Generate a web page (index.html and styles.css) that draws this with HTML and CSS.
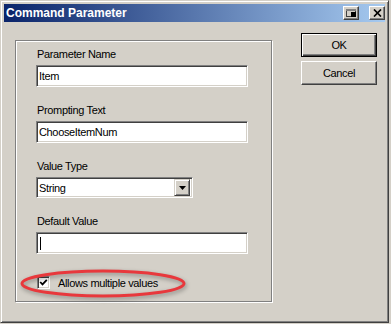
FILE: index.html
```html
<!DOCTYPE html>
<html lang="en">
<head>
    <meta charset="UTF-8">
    <title>Command Parameter</title>
    <link rel="stylesheet" href="styles.css">
</head>
<body>
    <div class="window">
        <div class="titlebar">
            <span class="title">Command Parameter</span>
            <div class="title-buttons">
                <span class="tbtn">
                    <svg width="12" height="10" viewBox="0 0 12 10">
                        <rect x="1.5" y="1.5" width="9" height="7" fill="none" stroke="#404040"/>
                        <rect x="1" y="1" width="10" height="2" fill="#808080"/>
                        <rect x="6" y="4" width="5" height="5" fill="#000"/>
                    </svg>
                </span>
                <span class="tbtn">
                    <svg width="9" height="8" viewBox="0 0 9 8">
                        <path d="M1 0.5 L8 7.5 M8 0.5 L1 7.5" stroke="#000" stroke-width="1.7"/>
                    </svg>
                </span>
            </div>
        </div>

        <div class="content">
            <div class="group">
                <div class="row">
                    <div class="label">Parameter Name</div>
                    <div class="field">Item</div>
                </div>
                <div class="row">
                    <div class="label">Prompting Text</div>
                    <div class="field">ChooseItemNum</div>
                </div>
                <div class="row">
                    <div class="label">Value Type</div>
                    <div class="select">
                        <span class="select-text">String</span>
                        <span class="drop-btn">
                            <svg width="7" height="4" viewBox="0 0 7 4"><path d="M0 0 H7 L3.5 4 Z" fill="#000"/></svg>
                        </span>
                    </div>
                </div>
                <div class="row">
                    <div class="label">Default Value</div>
                    <div class="field"><span class="caret"></span></div>
                </div>
                <div class="check-row">
                    <span class="checkbox">
                        <svg width="9" height="9" viewBox="0 0 9 9"><path d="M1.2 4 L3.5 6.4 L7.8 1.8" fill="none" stroke="#000" stroke-width="1.8"/></svg>
                    </span>
                    <span>Allows multiple values</span>
                </div>
            </div>

            <div class="buttons">
                <div class="btn default">OK</div>
                <div class="btn">Cancel</div>
            </div>
        </div>

        <!-- red marker drawn over the screenshot -->
        <svg class="highlight" width="389" height="323" viewBox="0 0 389 323">
            <ellipse cx="103" cy="283.5" rx="81" ry="12.5" fill="none" stroke="#e8383c" stroke-width="3"/>
        </svg>
    </div>
</body>
</html>
```

FILE: styles.css
```css
body {
    margin: 0;
    background: #d4d0c8;
    font-family: "Liberation Sans", Arial, sans-serif;
    font-size: 11px;
    letter-spacing: -0.35px;
    color: #000;
}
.window {
    position: relative;
    box-sizing: border-box;
    width: 389px;
    height: 323px;
    padding: 3px;
    background: #d4d0c8;
    border: 1px solid;
    border-color: #d4d0c8 #404040 #404040 #d4d0c8;
    box-shadow: inset 1px 1px #fff, inset -1px -1px #808080;
}
.titlebar {
    display: flex;
    align-items: center;
    justify-content: space-between;
    height: 18px;
    padding: 0 0 0 2px;
    background: linear-gradient(to right, #0a246a, #a6caf0);
}
.title {
    color: #fff;
    font-weight: bold;
    font-size: 12px;
    letter-spacing: 0;
}
.title-buttons {
    display: flex;
    gap: 10px;
}
.tbtn {
    display: flex;
    align-items: center;
    justify-content: center;
    box-sizing: border-box;
    width: 16px;
    height: 14px;
    background: #d4d0c8;
    border: 1px solid;
    border-color: #fff #404040 #404040 #fff;
    box-shadow: inset -1px -1px #808080;
}
.content {
    display: flex;
    align-items: flex-start;
    padding: 11px 0 0 11px;
}
.group {
    box-sizing: border-box;
    width: 257px;
    height: 262px;
    margin-top: 7px;
    padding: 7px 0 0 20px;
    border: 1px solid #808080;
    box-shadow: inset 1px 1px #fff, 1px 1px #fff;
}
.row {
    margin-bottom: 17px;
}
.label {
    line-height: 13px;
    margin-bottom: 4px;
    padding-left: 1px;
}
.field,
.select {
    box-sizing: border-box;
    display: flex;
    align-items: center;
    width: 212px;
    height: 22px;
    padding-left: 2px;
    background: #fff;
    border: 1px solid;
    border-color: #808080 #fff #fff #808080;
    box-shadow: inset 1px 1px #404040, inset -1px -1px #d4d0c8;
}
.select {
    width: 157px;
    height: 21px;
    padding-right: 2px;
    justify-content: space-between;
}
.caret {
    width: 1px;
    height: 13px;
    margin-left: 1px;
    background: #000;
}
.drop-btn {
    display: flex;
    align-items: center;
    justify-content: center;
    box-sizing: border-box;
    width: 16px;
    height: 17px;
    background: #d4d0c8;
    border: 1px solid;
    border-color: #d4d0c8 #404040 #404040 #d4d0c8;
    box-shadow: inset 1px 1px #fff, inset -1px -1px #808080;
}
.check-row {
    display: flex;
    align-items: center;
    gap: 8px;
    margin-top: 22px;
    padding-left: 1px;
}
.checkbox {
    display: flex;
    align-items: center;
    justify-content: center;
    box-sizing: border-box;
    width: 13px;
    height: 13px;
    background: #fff;
    border: 1px solid;
    border-color: #808080 #fff #fff #808080;
    box-shadow: inset 1px 1px #404040, inset -1px -1px #d4d0c8;
}
.buttons {
    display: flex;
    flex-direction: column;
    gap: 4px;
    margin-left: 29px;
}
.btn {
    display: flex;
    align-items: center;
    justify-content: center;
    box-sizing: border-box;
    width: 76px;
    height: 24px;
    background: #d4d0c8;
    border: 1px solid;
    border-color: #fff #404040 #404040 #fff;
    box-shadow: inset -1px -1px #808080;
}
.btn.default {
    border: 1px solid #000;
    box-shadow: inset 1px 1px #fff, inset -1px -1px #404040, inset -2px -2px #808080;
}
.highlight {
    position: absolute;
    left: -1px;
    top: -1px;
    pointer-events: none;
    filter: drop-shadow(1px 2px 2px rgba(0, 0, 0, 0.35));
}
```
